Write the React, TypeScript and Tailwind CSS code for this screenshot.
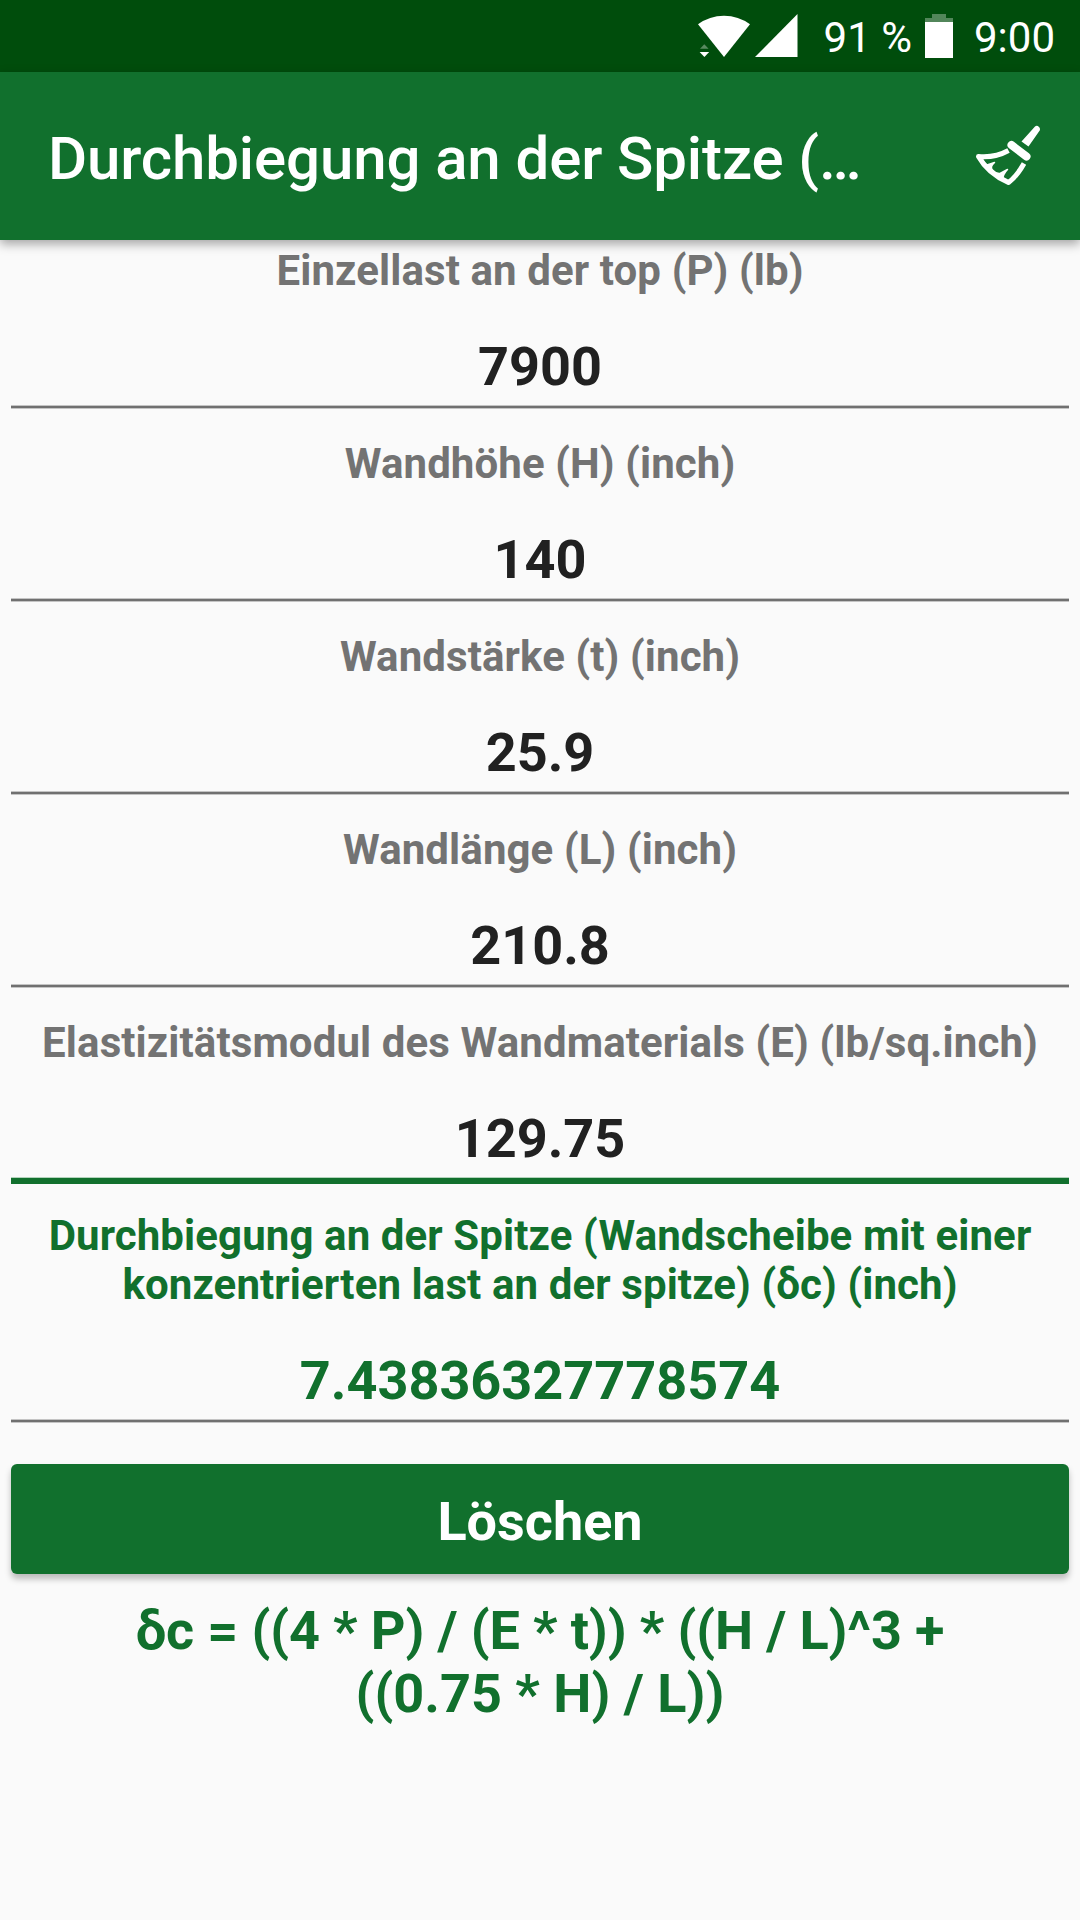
import React from "react";

const fields = [
  { label: "Einzellast an der top (P) (lb)", value: "7900" },
  { label: "Wandhöhe (H) (inch)", value: "140" },
  { label: "Wandstärke (t) (inch)", value: "25.9" },
  { label: "Wandlänge (L) (inch)", value: "210.8" },
  { label: "Elastizitätsmodul des Wandmaterials (E) (lb/sq.inch)", value: "129.75", focused: true },
];

function WifiIcon() {
  return (
    <svg className="h-[44px] w-[54px] shrink-0" viewBox="0 0 54 44" fill="#fff">
      <path d="M1 10.3Q12.5 1.7 27 1.7T53 10.3L27 43Z" />
      <path d="M3 34.8L7.3 30.2L11.6 34.8Z" opacity=".35" />
      <path d="M2.6 38H12.2L7.4 43Z" />
    </svg>
  );
}

function SignalIcon() {
  return (
    <svg className="ml-[4px] h-[44px] w-[43px] shrink-0" viewBox="0 0 43 44" fill="#fff">
      <path d="M0 43L42.5 0V43Z" />
    </svg>
  );
}

function BatteryIcon() {
  return (
    <svg className="ml-[13px] h-[44px] w-[28px] shrink-0" viewBox="0 0 28 44" fill="#fff">
      <path d="M7 0H21V4H28V8H0V4H7Z" opacity=".32" />
      <path d="M0 8H28V44H0Z" />
    </svg>
  );
}

function BroomIcon() {
  return (
    <svg className="h-[64px] w-[68px] blur-[0.6px]" viewBox="0 0 68 64" fill="none" stroke="#fff">
      <path d="M61 2.500Q63 1 65 3Q67 5 65 7.500L54.500 22.500L47.500 17.500Z" fill="#fff" stroke="none" />
      <path d="M37.500 21L52.500 32.500" strokeWidth="8" strokeLinecap="round" />
      <path d="M34.500 26.500Q21 34 4.500 32.500Q14 49.500 34.500 58.500Q43 52 50 39.500" strokeWidth="5" strokeLinejoin="round" />
      <path d="M5 33L13 41L20.500 38.500Q15.500 43 18.500 46Q22 50 26 49.500L33.500 45.500Q29 50 28.500 56L34 58Q14 50 5 33Z" fill="#fff" strokeWidth="1.500" strokeLinejoin="round" />
    </svg>
  );
}

function Underline({ focused = false }: { focused?: boolean }) {
  return focused ? (
    <div className="mt-[7px] h-[7px] border-t border-[#b3d3bc] bg-[#11702d]" />
  ) : (
    <div className="mt-[7px] h-[4px] border-y border-[#c4c4c4] bg-[#707070]" />
  );
}

export default function App() {
  return (
    <div className="flex h-[1920px] w-[1080px] flex-col overflow-hidden bg-[#fafafa] text-center font-['Roboto',sans-serif] font-bold">
      <div className="flex h-[72px] shrink-0 items-center justify-end bg-[#004d0c] pr-[25px] text-[42px] leading-[49px] font-normal text-white">
        <WifiIcon />
        <SignalIcon />
        <span className="ml-[26px] pt-[3px]">91 %</span>
        <BatteryIcon />
        <span className="ml-[21px] pt-[3px]">9:00</span>
      </div>
      <header className="relative flex h-[168px] shrink-0 items-center justify-between bg-[#11702d] pr-[38px] pl-12 text-white shadow-[0_4px_10px_rgba(0,0,0,0.35)]">
        <h1 className="pt-[6px] text-[60px] leading-[70px] font-medium tracking-[-0.12px]">Durchbiegung an der Spitze (…</h1>
        <button aria-label="Leeren">
          <BroomIcon />
        </button>
      </header>
      <main className="px-[11px]">
        {fields.map(({ label, value, focused }) => (
          <section key={label} className="h-[193px] pt-[6px]">
            <div className="text-[42px] leading-[49px] tracking-[0.1px] text-[#737373]">{label}</div>
            <div className="mt-10 text-[54px] leading-[63px] text-[#212121]">{value}</div>
            <Underline focused={focused} />
          </section>
        ))}
        <section className="pt-[6px] text-[#11702d]">
          <div className="text-[42px] leading-[49px] tracking-[0.1px]">
            Durchbiegung an der Spitze (Wandscheibe mit einer konzentrierten last an der spitze) (δc) (inch)
          </div>
          <div className="mt-10 text-[54px] leading-[63px]">7.43836327778574</div>
          <Underline />
        </section>
        <button className="mt-[41px] block h-[110px] w-full rounded-[6px] bg-[#11702d] pt-[4px] text-[54px] leading-[63px] text-white shadow-[0_5px_6px_rgba(0,0,0,0.25)]">
          Löschen
        </button>
        <div className="mt-[25px] text-[54px] leading-[63px] text-[#11702d]">
          <div className="tracking-[-0.13px]">δc = ((4 * P) / (E * t)) * ((H / L)^3 +</div>
          <div>((0.75 * H) / L))</div>
        </div>
      </main>
    </div>
  );
}
